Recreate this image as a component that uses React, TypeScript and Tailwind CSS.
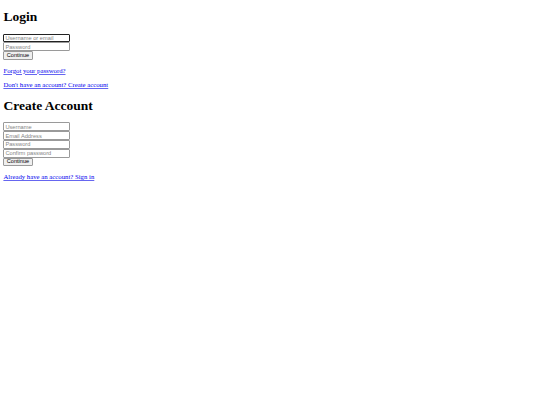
import React from "react";

const inputClass =
  "block box-border w-[67px] h-[8.8px] px-[1px] py-0 border-[0.8px] border-[#9a9a9a] rounded-[1px] bg-white text-[5.7px] leading-none font-['Liberation_Sans',Arial,sans-serif] text-black placeholder:text-[#858585] outline-none";

const ContinueButton = () => (
  <button
    type="button"
    className="block box-border h-[8.8px] px-[2.4px] border-[0.8px] border-[#9a9a9a] rounded-[1px] bg-[#efefef] text-[5.6px] leading-none font-['Liberation_Sans',Arial,sans-serif] text-black"
  >
    Continue
  </button>
);

const TextLink = ({ children }: { children: React.ReactNode }) => (
  <p className="my-[6.75px] text-[6.75px] leading-[7.8px]">
    <a href="#" className="text-[#0000ee] underline underline-offset-[0.6px] decoration-[0.4px] decoration-[#6666f0]">
      {children}
    </a>
  </p>
);

export default function App() {
  return (
    <div className="min-h-[405px] bg-white px-[3.4px] pt-px font-['Liberation_Serif','Times_New_Roman',serif] text-black">
      {/* Login */}
      <h1 className="mt-[8px] mb-[9px] text-[13.5px] leading-[15.5px] font-bold">Login</h1>
      <form>
        <input className={inputClass + " !border-[#222]"} placeholder="Username or email" />
        <input className={inputClass} type="password" placeholder="Password" />
        <ContinueButton />
      </form>
      <TextLink>Forgot your password?</TextLink>
      <TextLink>Don't have an account? Create account</TextLink>

      {/* Create Account */}
      <h1 className="my-[9px] text-[13.5px] leading-[15.5px] font-bold">Create Account</h1>
      <form>
        <input className={inputClass} placeholder="Username" />
        <input className={inputClass} placeholder="Email Address" />
        <input className={inputClass} type="password" placeholder="Password" />
        <input className={inputClass} type="password" placeholder="Confirm password" />
        <ContinueButton />
      </form>
      <TextLink>Already have an account? Sign in</TextLink>
    </div>
  );
}
